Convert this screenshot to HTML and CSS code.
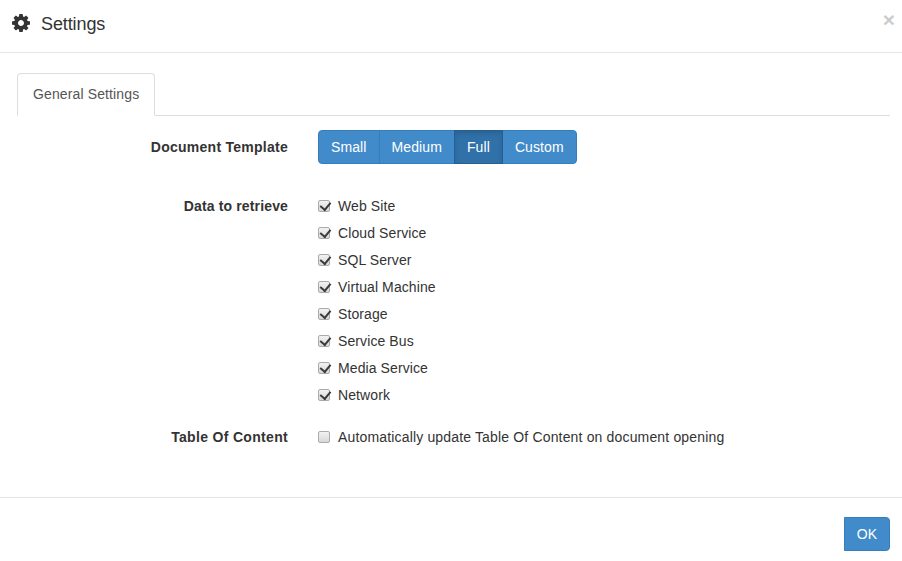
FILE: index.html
```html
<!DOCTYPE html>
<html lang="en">
<head>
<meta charset="utf-8">
<title>Settings</title>
<link rel="stylesheet" href="styles.css">
</head>
<body>
<div class="modal">
  <header class="modal-header">
    <svg class="gear" viewBox="0 0 1536 1536" aria-hidden="true"><path d="M1024 768q0-106-75-181t-181-75-181 75-75 181 75 181 181 75 181-75 75-181zm512-109v222q0 12-8 23t-20 13l-185 28q-19 54-39 91 35 50 107 138 10 12 10 25t-9 23q-27 37-99 108t-94 71q-12 0-26-9l-138-108q-44 23-91 38-16 136-29 186-7 28-36 28h-222q-14 0-24.5-8.5t-11.5-21.5l-28-184q-49-16-90-37l-141 107q-10 9-25 9-14 0-25-11-126-114-165-168-7-10-7-23 0-12 8-23 15-21 51-66.500t54-70.500q-27-50-41-99l-183-27q-13-2-21-12.500t-8-23.500v-222q0-12 8-23t19-13l186-28q14-46 39-92-40-57-107-138-10-12-10-24 0-10 9-23 26-36 98.500-107.500t94.500-71.500q13 0 26 10l138 107q44-23 91-38 16-136 29-186 7-28 36-28h222q14 0 24.500 8.500t11.500 21.500l28 184q49 16 90 37l142-107q9-9 24-9 13 0 25 10 129 119 165 170 7 8 7 22 0 12-8 23-15 21-51 66.500t-54 70.500q26 50 41 98l183 28q13 2 21 12.500t8 23.500z"/></svg>
    <h4 class="modal-title">Settings</h4>
    <button class="close" type="button">×</button>
  </header>
  <main class="modal-body">
    <ul class="tabs">
      <li class="tab">General Settings</li>
    </ul>
    <form class="form">
      <div class="row row-template">
        <div class="label label-template">Document Template</div>
        <div class="btn-group">
          <button class="btn" type="button">Small</button>
          <button class="btn" type="button">Medium</button>
          <button class="btn active" type="button">Full</button>
          <button class="btn" type="button">Custom</button>
        </div>
      </div>
      <div class="row row-data">
        <div class="label label-check label-data">Data to retrieve</div>
        <div class="checks">
          <label class="check"><input type="checkbox" checked>Web Site</label>
          <label class="check"><input type="checkbox" checked>Cloud Service</label>
          <label class="check"><input type="checkbox" checked>SQL Server</label>
          <label class="check"><input type="checkbox" checked>Virtual Machine</label>
          <label class="check"><input type="checkbox" checked>Storage</label>
          <label class="check"><input type="checkbox" checked>Service Bus</label>
          <label class="check"><input type="checkbox" checked>Media Service</label>
          <label class="check"><input type="checkbox" checked>Network</label>
        </div>
      </div>
      <div class="row row-toc">
        <div class="label label-check label-toc">Table Of Content</div>
        <div class="checks">
          <label class="check check-long"><input type="checkbox">Automatically update Table Of Content on document opening</label>
        </div>
      </div>
    </form>
  </main>
  <footer class="modal-footer">
    <button class="btn btn-ok" type="button">OK</button>
  </footer>
</div>
</body>
</html>
```
FILE: styles.css
```css
* { box-sizing: border-box; }
html, body { margin: 0; padding: 0; background: #fff; }
body {
  font-family: "Liberation Sans", Arial, sans-serif;
  font-size: 14px;
  line-height: 20px;
  color: #333;
  overflow: hidden;
}
.modal { width: 902px; height: 561px; display: flex; flex-direction: column; }
.modal-header {
  height: 53px;
  border-bottom: 1px solid #e5e5e5;
  display: flex;
  align-items: center;
  padding: 0 7px 5px 12px;
}
.gear { width: 18px; height: 18px; fill: #333; flex: none; margin-top: -2px; }
.modal-title { margin: 0 0 0 11px; font-size: 18px; font-weight: 500; line-height: 20px; flex: 1; letter-spacing: -.1px; }
.close {
  border: 0; background: none; padding: 0;
  font-family: inherit; font-size: 21px; font-weight: 700; line-height: 20px;
  color: #000; opacity: .2;
  margin-top: -8px;
}
.modal-body { height: 444px; padding: 20px 12px 0 17px; }
.tabs { list-style: none; margin: 0; padding: 0; border-bottom: 1px solid #ddd; height: 43px; display: flex; }
.tab {
  height: 43px; padding: 10px 15px;
  border: 1px solid #ddd; border-bottom-color: #fff; border-radius: 4px 4px 0 0;
  color: #555; background: #fff;
  letter-spacing: .125px;
}
.form { display: flex; flex-direction: column; }
.row { display: flex; }
.row-template { margin-top: 14px; }
.row-data { margin-top: 32px; }
.row-toc { margin-top: 22px; }
.label { width: 271px; text-align: right; font-weight: 700; padding-top: 7px; letter-spacing: .2px; }
.label-check { padding-top: 0; }
.label-template { letter-spacing: .26px; }
.label-data { letter-spacing: .14px; }
.label-toc { letter-spacing: .32px; }
.btn-group { display: flex; margin-left: 30px; }
.btn {
  height: 34px; padding: 6px 12px;
  font-family: inherit; font-size: 14px; line-height: 20px;
  color: #fff; background: #428bca; border: 1px solid #357ebd;
  margin-left: -1px;
  letter-spacing: .1px;
}
.btn:first-child { margin-left: 0; border-radius: 4px 0 0 4px; }
.btn:last-child { border-radius: 0 4px 4px 0; }
.btn.active { background: #3071a9; border-color: #285e8e; box-shadow: inset 0 3px 5px rgba(0,0,0,.125); position: relative; }
.checks { margin-left: 30px; display: flex; flex-direction: column; gap: 7px; }
.check { display: flex; align-items: center; height: 20px; color: #333; letter-spacing: .1px; }
.check-long { letter-spacing: .16px; }
.check input {
  appearance: none;
  -webkit-appearance: none;
  width: 12px; height: 12px; margin: -1px 8px 0 0;
  border: 1px solid #ababab; border-radius: 2px;
  background: linear-gradient(#f2f2f2, #d8d8d8);
  position: relative;
}
.check input:checked::after {
  content: "";
  position: absolute;
  left: 2.5px; top: -.5px;
  width: 4.5px; height: 8px;
  border: solid #3a3a3a;
  border-width: 0 2.5px 2.5px 0;
  transform: rotate(40deg);
}
.modal-footer {
  flex: 1;
  border-top: 1px solid #e5e5e5;
  display: flex; justify-content: flex-end; align-items: flex-start;
  padding: 19px 12px 0 0;
}
.btn-ok { border-radius: 4px; margin-left: 0; letter-spacing: 0; }
```
